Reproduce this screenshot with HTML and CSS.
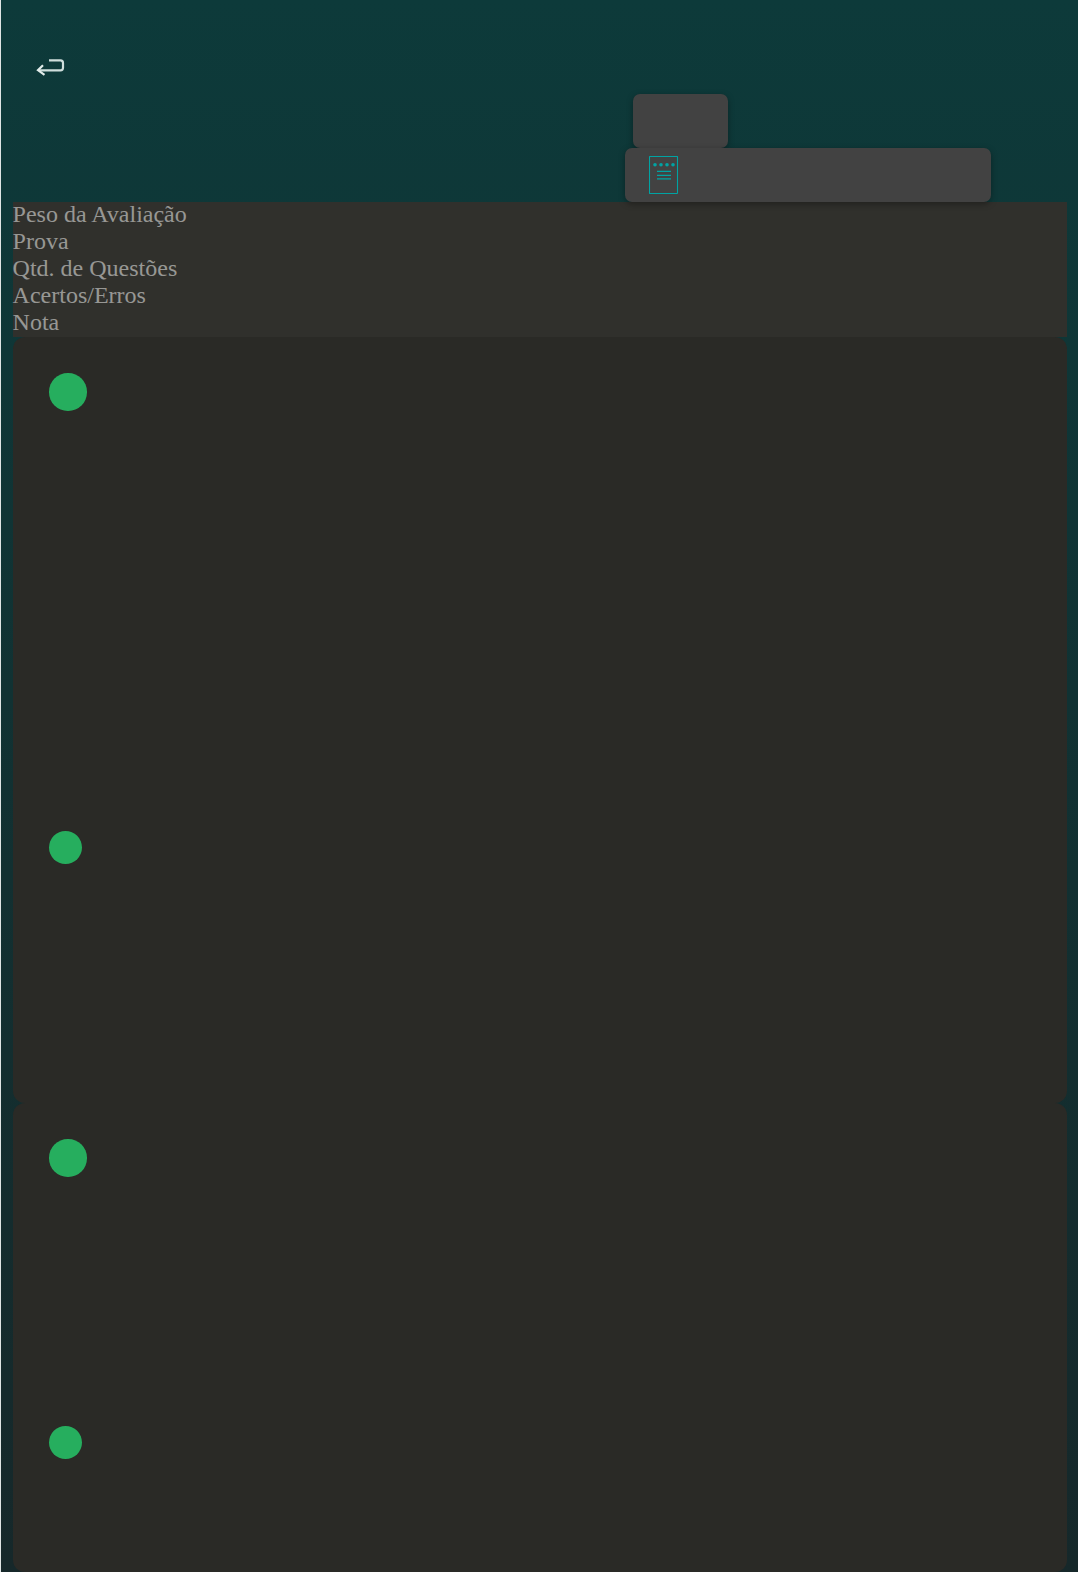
FILE: index.html
```html
<!DOCTYPE html>
<html lang="pt">
<head>
<meta charset="utf-8">
<title>Avaliações</title>
<link rel="stylesheet" href="styles.css">
</head>
<body>
<div class="app">
  <header class="top">
    <a class="back" aria-label="Voltar">
      <svg class="back-icon" width="30" height="22" viewBox="0 0 30 22" fill="none">
        <path d="M14 3.4H25.5Q28 3.4 28 6V10.8Q28 13.4 25.5 13.4H4" stroke="#cfdedc" stroke-width="2.2"/>
        <path d="M8 8.2L3 13.2L9.5 17.8" stroke="#e2ecea" stroke-width="2.2"/>
      </svg>
    </a>
    <div class="tiles">
      <div class="tile tile-small"></div>
      <div class="tile tile-wide">
        <svg class="doc-icon" width="30" height="39" viewBox="0 0 30 39" fill="none">
          <rect x="0.5" y="0.5" width="28" height="37" rx="0.5" stroke="#00a3a3" stroke-width="1.1"/>
          <circle cx="6" cy="8.7" r="1.8" fill="#00a3a3"/>
          <circle cx="12" cy="8.7" r="1.8" fill="#00a3a3"/>
          <circle cx="18" cy="8.7" r="1.8" fill="#00a3a3"/>
          <circle cx="24" cy="8.7" r="1.8" fill="#00a3a3"/>
          <path d="M8 15.3H22M8 19.3H22M8 22.8H22" stroke="#00a3a3" stroke-width="1.2"/>
        </svg>
      </div>
    </div>
  </header>
  <main class="content">
    <div class="labels">
      <div class="label">Peso da Avaliação</div>
      <div class="label">Prova</div>
      <div class="label">Qtd. de Questões</div>
      <div class="label">Acertos/Erros</div>
      <div class="label">Nota</div>
    </div>
    <section class="card card-first">
      <span class="dot dot-big"></span>
      <span class="dot dot-small gap-first"></span>
    </section>
    <section class="card card-second">
      <span class="dot dot-big"></span>
      <span class="dot dot-small gap-second"></span>
    </section>
  </main>
</div>
</body>
</html>
```

FILE: styles.css
```css
html, body {
  margin: 0;
  padding: 0;
  height: 1572px;
  overflow: hidden;
  background: #dfe5e4;
}
.app {
  margin-left: 1px;
  height: 1572px;
  background: linear-gradient(180deg, #0d3a3a 0%, #16282a 100%);
  font-family: "Liberation Serif", "Times New Roman", serif;
}
.top {
  height: 202px;
  display: flex;
  justify-content: space-between;
  box-sizing: border-box;
}
.back {
  display: block;
  padding: 57px 0 0 34px;
}
.back-icon {
  display: block;
}
.tiles {
  width: 366px;
  margin-right: 87px;
  padding-top: 94px;
  display: flex;
  flex-direction: column;
  box-sizing: border-box;
}
.tile {
  background: #424242;
  border-radius: 7px;
  box-shadow: 0 2px 6px rgba(0, 0, 0, 0.34);
}
.tile-small {
  width: 95.6px;
  height: 54px;
  margin-left: 7.7px;
}
.tile-wide {
  height: 54px;
  display: flex;
  align-items: center;
  padding-left: 24px;
}
.content {
  padding: 0 11px 0 12px;
}
.labels {
  background: #30302c;
  font-size: 24px;
}
.label {
  color: #dcdcda;
  opacity: 0.6;
  height: 27px;
  line-height: 25px;
  margin-left: -0.4px;
}
.card {
  background: #2a2a26;
  border-radius: 12px;
  padding: 36px 36px 0;
  box-sizing: border-box;
}
.card-first {
  height: 766px;
}
.card-second {
  height: 469px;
}
.dot {
  display: block;
  border-radius: 50%;
  background: #26ae5e;
}
.dot-big {
  width: 37.6px;
  height: 37.6px;
}
.dot-small {
  width: 33px;
  height: 33px;
}
.gap-first {
  margin-top: 420.4px;
}
.gap-second {
  margin-top: 249.4px;
}
```
